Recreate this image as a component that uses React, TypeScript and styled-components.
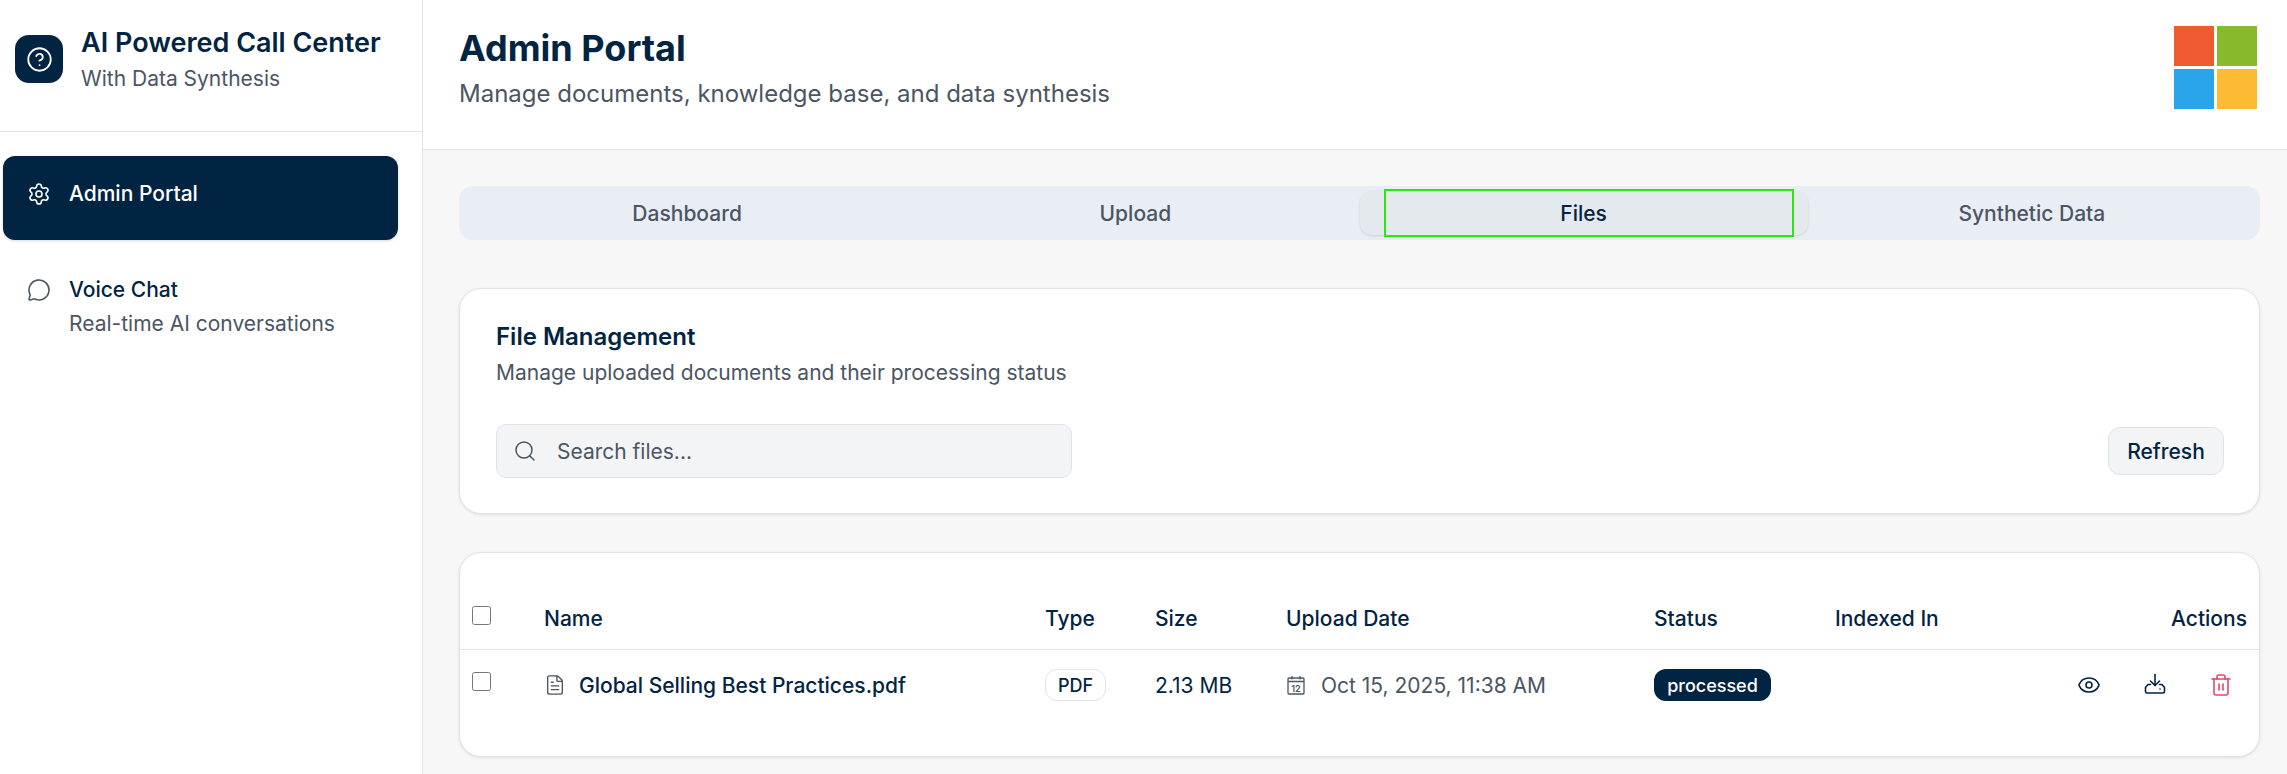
import React from 'react'
import styled, { createGlobalStyle } from 'styled-components'
import { CircleHelp, Eye, FileText, MessageCircle, Search, Settings, Trash2 } from 'lucide-react'

const navy = '#012443'
const muted = '#4b5563'
const line = '#dfe3ea'

const GlobalStyle = createGlobalStyle`
  html, body {
    margin: 0;
    padding: 0;
    background: #f7f7f7;
  }
  * {
    box-sizing: border-box;
  }
  body {
    font-family: Inter, "Liberation Sans", sans-serif;
    color: ${navy};
  }
`

const Shell = styled.div`
  display: flex;
  height: 774px;
  overflow: hidden;
`

const Sidebar = styled.aside`
  width: 423px;
  flex-shrink: 0;
  background: #fff;
  border-right: 1px solid ${line};
`

const Brand = styled.div`
  display: flex;
  align-items: center;
  gap: 18px;
  height: 132px;
  padding: 0 15px 13px;
  border-bottom: 1px solid ${line};
`

const BrandMark = styled.div`
  width: 48px;
  height: 48px;
  border-radius: 14px;
  background: ${navy};
  color: #fff;
  display: flex;
  align-items: center;
  justify-content: center;
`

const BrandTitle = styled.div`
  font-size: 27px;
  font-weight: 600;
  line-height: 40px;
`

const BrandSub = styled.div`
  font-size: 21px;
  line-height: 32px;
  color: ${muted};
`

const Nav = styled.nav`
  display: flex;
  flex-direction: column;
  gap: 12px;
  padding: 24px 24px 0 3px;
`

const NavItem = styled.div<{ $active?: boolean }>`
  display: flex;
  gap: 18px;
  height: 84px;
  padding: 22px 0 0 24px;
  border-radius: 12px;
  background: ${(p) => (p.$active ? navy : 'transparent')};
  color: ${(p) => (p.$active ? '#fff' : muted)};
  box-shadow: ${(p) => (p.$active ? '0 1px 3px rgba(0,0,0,.15)' : 'none')};

  svg {
    margin-top: 4px;
    flex-shrink: 0;
  }
`

const NavLabel = styled.div<{ $active?: boolean }>`
  font-size: 21px;
  font-weight: 500;
  line-height: 32px;
  color: ${(p) => (p.$active ? '#fff' : navy)};
`

const NavHint = styled.div`
  font-size: 21px;
  line-height: 36px;
  color: ${muted};
`

const Main = styled.main`
  flex: 1;
  min-width: 0;
`

const Header = styled.header`
  display: flex;
  justify-content: space-between;
  align-items: flex-start;
  height: 150px;
  padding: 21px 30px 0 36px;
  background: #fff;
  border-bottom: 1px solid ${line};
`

const PageTitle = styled.h1`
  margin: 0;
  font-size: 36px;
  font-weight: 700;
  line-height: 54px;
`

const PageSub = styled.p`
  margin: 1px 0 0;
  font-size: 24px;
  line-height: 36px;
  color: ${muted};
`

const Logo = styled.div`
  display: grid;
  grid-template-columns: 40px 40px;
  grid-template-rows: 40px 40px;
  gap: 3px;
  margin-top: 5px;
`

const LogoSquare = styled.div<{ $color: string }>`
  background: ${(p) => p.$color};
`

const Content = styled.div`
  display: flex;
  flex-direction: column;
  padding: 36px 27px 0 36px;
`

const TabTrack = styled.div`
  display: grid;
  grid-template-columns: repeat(4, 1fr);
  height: 54px;
  padding: 5px 4px;
  border-radius: 14px;
  background: #e9eef5;
  margin-bottom: 48px;
`

const Tab = styled.div<{ $active?: boolean }>`
  position: relative;
  display: flex;
  align-items: center;
  justify-content: center;
  font-size: 21px;
  font-weight: 500;
  border-radius: 12px;
  color: ${(p) => (p.$active ? navy : muted)};
  background: ${(p) => (p.$active ? '#e4e9ed' : 'transparent')};
  box-shadow: ${(p) => (p.$active ? '0 1px 3px rgba(0,0,0,.12)' : 'none')};
`

const FocusRing = styled.div`
  position: absolute;
  left: 24px;
  right: 14px;
  top: -2px;
  bottom: -2px;
  border: 2px solid #2ee60f;
`

const Card = styled.section`
  background: #fff;
  border: 1px solid ${line};
  border-radius: 22px;
  box-shadow: 0 1px 3px rgba(0, 0, 0, 0.1);
`

const FilterCard = styled(Card)`
  height: 226px;
  padding: 32px 35px 0 36px;
  margin-bottom: 38px;
`

const CardTitle = styled.h2`
  margin: 0;
  font-size: 24px;
  font-weight: 600;
  line-height: 32px;
`

const CardSub = styled.p`
  margin: 4px 0 0;
  font-size: 21px;
  line-height: 32px;
  color: ${muted};
`

const Toolbar = styled.div`
  display: flex;
  justify-content: space-between;
  align-items: center;
  margin-top: 35px;
`

const SearchBox = styled.div`
  display: flex;
  align-items: center;
  gap: 20px;
  width: 576px;
  height: 54px;
  padding: 0 16px;
  background: #f3f4f6;
  border: 1px solid ${line};
  border-radius: 10px;
  color: ${muted};
  font-size: 21px;
`

const RefreshButton = styled.button`
  width: 116px;
  height: 48px;
  padding: 0;
  background: #f3f4f6;
  border: 1px solid ${line};
  border-radius: 12px;
  font: 500 21px Inter, sans-serif;
  color: ${navy};
`

const TableCard = styled(Card)`
  height: 205px;
  overflow: hidden;
`

const Table = styled.table`
  width: 100%;
  border-collapse: collapse;
  table-layout: fixed;
`

const HeadCell = styled.th<{ $right?: boolean }>`
  height: 96px;
  padding: 36px 12px 0;
  text-align: ${(p) => (p.$right ? 'right' : 'left')};
  font-size: 21px;
  font-weight: 500;
  border-bottom: 1px solid ${line};
`

const Cell = styled.td`
  height: 72px;
  padding: 0 12px 0;
  font-size: 21px;
`

const Check = styled.input.attrs({ type: 'checkbox' })`
  display: block;
  width: 19px;
  height: 19px;
  margin: 0 0 7px;
`

const NameWrap = styled.div`
  display: flex;
  align-items: center;
  gap: 13px;
  font-weight: 500;
`

const DateWrap = styled.div`
  display: flex;
  align-items: center;
  gap: 15px;
  color: ${muted};
`

const TypeBadge = styled.span`
  display: inline-flex;
  align-items: center;
  justify-content: center;
  width: 61px;
  height: 32px;
  border: 1px solid ${line};
  border-radius: 12px;
  font-size: 18px;
  font-weight: 500;
`

const StatusBadge = styled.span`
  display: inline-flex;
  align-items: center;
  justify-content: center;
  width: 117px;
  height: 32px;
  border-radius: 12px;
  background: ${navy};
  color: #fff;
  font-size: 18px;
  font-weight: 500;
`

const Actions = styled.div`
  display: flex;
  justify-content: flex-end;
  align-items: center;
  gap: 42px;
  padding-right: 14px;
`

const DownloadIcon = () => (
  <svg width="24" height="24" viewBox="0 0 24 24" fill="none" stroke="currentColor" strokeWidth="1.6" strokeLinecap="round" strokeLinejoin="round">
    <path d="M12 1.500V12.500" />
    <path d="m7.500 8 4.500 4.500L16.500 8" />
    <path d="M7.500 11.500H5L2.500 14.500V18.500A1.500 1.500 0 0 0 4 20H20a1.500 1.500 0 0 0 1.500-1.500V14.500L19 11.500H16.500" />
    <path d="M17 16h.01" />
  </svg>
)

const CalendarIcon = () => (
  <svg width="20" height="20" viewBox="0 0 20 20" fill="none" stroke="currentColor" strokeWidth="1.300">
    <rect x="2" y="3" width="16" height="16" rx="1" />
    <path d="M2 6.500h16M6 1v3.500M14 1v3.500" />
    <text x="10" y="16.500" textAnchor="middle" fontSize="9" fontWeight="600" fontFamily="Inter, sans-serif" fill="currentColor" stroke="none">12</text>
  </svg>
)

const App = () => {
  return (
    <>
      <GlobalStyle />
      <Shell>
        <Sidebar>
          <Brand>
            <BrandMark>
              <CircleHelp size={27} strokeWidth={1.6} />
            </BrandMark>
            <div>
              <BrandTitle>AI Powered Call Center</BrandTitle>
              <BrandSub>With Data Synthesis</BrandSub>
            </div>
          </Brand>
          <Nav>
            <NavItem $active>
              <Settings size={24} strokeWidth={1.6} />
              <NavLabel $active>Admin Portal</NavLabel>
            </NavItem>
            <NavItem>
              <MessageCircle size={24} strokeWidth={1.6} />
              <div>
                <NavLabel>Voice Chat</NavLabel>
                <NavHint>Real-time AI conversations</NavHint>
              </div>
            </NavItem>
          </Nav>
        </Sidebar>
        <Main>
          <Header>
            <div>
              <PageTitle>Admin Portal</PageTitle>
              <PageSub>Manage documents, knowledge base, and data synthesis</PageSub>
            </div>
            <Logo>
              <LogoSquare $color="#f05a30" />
              <LogoSquare $color="#86b92c" />
              <LogoSquare $color="#2aa5ec" />
              <LogoSquare $color="#fdbb33" />
            </Logo>
          </Header>
          <Content>
            <TabTrack>
              <Tab>Dashboard</Tab>
              <Tab>Upload</Tab>
              <Tab $active>
                Files
                <FocusRing />
              </Tab>
              <Tab>Synthetic Data</Tab>
            </TabTrack>
            <FilterCard>
              <CardTitle>File Management</CardTitle>
              <CardSub>Manage uploaded documents and their processing status</CardSub>
              <Toolbar>
                <SearchBox>
                  <Search size={24} strokeWidth={1.5} />
                  Search files...
                </SearchBox>
                <RefreshButton>Refresh</RefreshButton>
              </Toolbar>
            </FilterCard>
            <TableCard>
              <Table>
                <colgroup>
                  <col style={{ width: 72 }} />
                  <col style={{ width: 501 }} />
                  <col style={{ width: 110 }} />
                  <col style={{ width: 131 }} />
                  <col style={{ width: 368 }} />
                  <col style={{ width: 181 }} />
                  <col style={{ width: 200 }} />
                  <col />
                </colgroup>
                <thead>
                  <tr>
                    <HeadCell>
                      <Check />
                    </HeadCell>
                    <HeadCell>Name</HeadCell>
                    <HeadCell>Type</HeadCell>
                    <HeadCell>Size</HeadCell>
                    <HeadCell>Upload Date</HeadCell>
                    <HeadCell>Status</HeadCell>
                    <HeadCell>Indexed In</HeadCell>
                    <HeadCell $right>Actions</HeadCell>
                  </tr>
                </thead>
                <tbody>
                  <tr>
                    <Cell>
                      <Check />
                    </Cell>
                    <Cell>
                      <NameWrap>
                        <FileText size={22} strokeWidth={1.5} color={muted} />
                        Global Selling Best Practices.pdf
                      </NameWrap>
                    </Cell>
                    <Cell>
                      <TypeBadge>PDF</TypeBadge>
                    </Cell>
                    <Cell>2.13 MB</Cell>
                    <Cell>
                      <DateWrap>
                        <CalendarIcon />
                        Oct 15, 2025, 11:38 AM
                      </DateWrap>
                    </Cell>
                    <Cell>
                      <StatusBadge>processed</StatusBadge>
                    </Cell>
                    <Cell />
                    <Cell>
                      <Actions>
                        <Eye size={24} strokeWidth={1.6} />
                        <DownloadIcon />
                        <Trash2 size={24} strokeWidth={1.6} color="#e0476a" />
                      </Actions>
                    </Cell>
                  </tr>
                </tbody>
              </Table>
            </TableCard>
          </Content>
        </Main>
      </Shell>
    </>
  )
}

export default App
